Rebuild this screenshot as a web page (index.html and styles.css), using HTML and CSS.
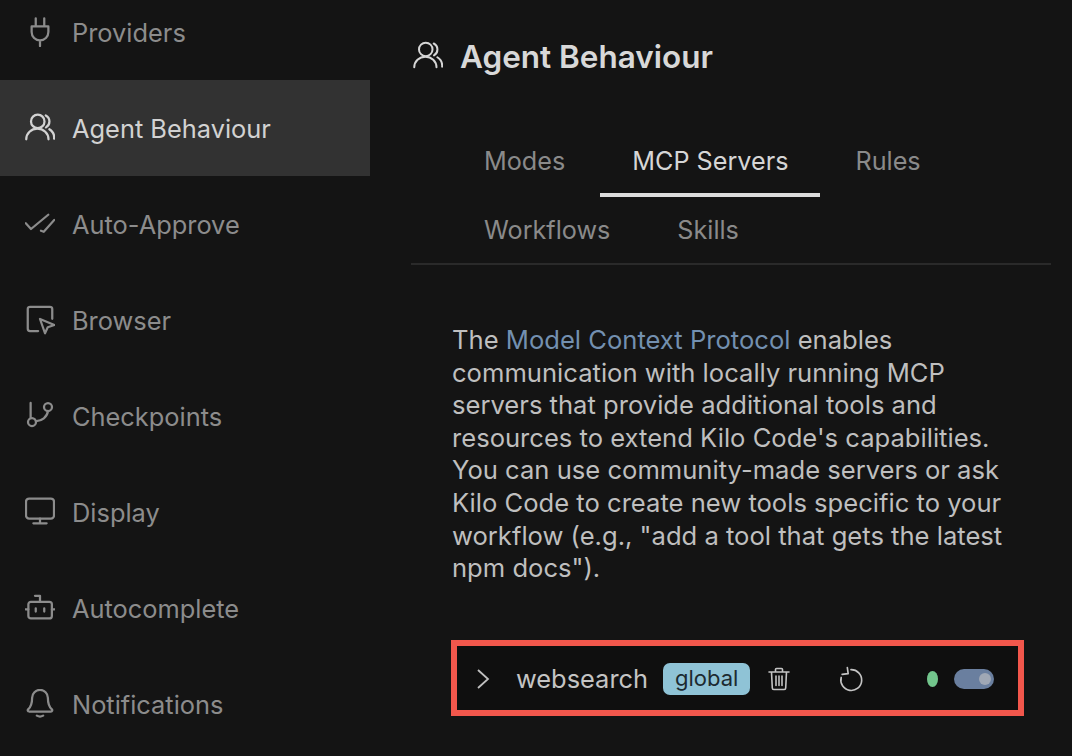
FILE: index.html
```html
<!DOCTYPE html>
<html lang="en">
<head>
<meta charset="utf-8">
<title>Agent Behaviour</title>
<link rel="stylesheet" href="styles.css">
</head>
<body>
<div class="app">
  <nav class="sidebar">
    <a class="nav-item"><svg class="nav-icon" viewBox="0 0 24 24"><path d="M8.600 1v6.500M15.400 1v6.500M5.300 7.500h13.400v4.500a6.700 6.700 0 0 1-13.400 0zM12 18.700v4.500"/></svg><span>Providers</span></a>
    <a class="nav-item active"><svg class="nav-icon" viewBox="0 0 24 24"><circle cx="10.200" cy="6.700" r="5.400"/><path d="M1 21A8.800 8.400 0 0 1 18.800 21M16.600 2A5.400 5.400 0 0 1 16.800 11.500M19.500 13A8 8 0 0 1 23.300 20.500"/></svg><span>Agent Behaviour</span></a>
    <a class="nav-item"><svg class="nav-icon" viewBox="0 0 24 24"><path d="M.6 11.400L4.800 16 18.600 4.600M12.800 17.400L15 18.200 23.400 8.800"/></svg><span>Auto-Approve</span></a>
    <a class="nav-item"><svg class="nav-icon" viewBox="0 0 24 24"><path d="M10.500 20.800H4a1.800 1.800 0 0 1-1.800-1.800V3.200A1.800 1.800 0 0 1 4 1.400h16a1.800 1.800 0 0 1 1.800 1.800V11"/><path d="M12 11.200L23.500 16 18.200 17.800 16 22.600z"/></svg><span>Browser</span></a>
    <a class="nav-item"><svg class="nav-icon" viewBox="0 0 24 24"><path d="M4.500 1.500v12"/><circle cx="18.400" cy="4.800" r="3.200"/><circle cx="5.600" cy="16.800" r="3.200"/><path d="M18.400 8A9.500 9.500 0 0 1 8.700 16"/></svg><span>Checkpoints</span></a>
    <a class="nav-item"><svg class="nav-icon" viewBox="0 0 24 24"><rect x=".8" y="1.200" width="22.400" height="16" rx="2.500"/><path d="M6.700 21h10.600M12 17.200V21"/></svg><span>Display</span></a>
    <a class="nav-item"><svg class="nav-icon" viewBox="0 0 24 24"><path d="M12 7V2.200H8"/><rect x="2.700" y="7" width="18.800" height="13.300" rx="2"/><path d="M.5 13h2.200M21.500 13h2.200M8.600 12.200v2.600M15.400 12.200v2.600"/></svg><span>Autocomplete</span></a>
    <a class="nav-item"><svg class="nav-icon" viewBox="0 0 24 24"><path d="M9.500 21.300q2.500 1.500 5 0M3.200 18h17.600a1 1 0 0 0 .7-1.700C20 15 18.300 13 18.300 7A6.300 6.300 0 0 0 5.700 7c0 6-1.700 8-3.200 9.300A1 1 0 0 0 3.200 18z"/></svg><span>Notifications</span></a>
  </nav>
  <main class="content">
    <header class="page-header">
      <svg class="header-icon" viewBox="0 0 24 24"><circle cx="10.200" cy="6.700" r="5.400"/><path d="M1 21A8.800 8.400 0 0 1 18.800 21M16.600 2A5.400 5.400 0 0 1 16.800 11.500M19.500 13A8 8 0 0 1 23.300 20.500"/></svg>
      <h1>Agent Behaviour</h1>
    </header>
    <div class="tabs">
      <a class="tab">Modes</a>
      <a class="tab selected">MCP Servers</a>
      <a class="tab">Rules</a>
      <a class="tab">Workflows</a>
      <a class="tab">Skills</a>
    </div>
    <section class="panel">
      <p class="intro">The <a class="link">Model Context Protocol</a> enables communication with locally running MCP servers that provide additional tools and resources to extend Kilo Code's capabilities. You can use community-made servers or ask Kilo Code to create new tools specific to your workflow (e.g., "add a tool that gets the latest npm docs").</p>
      <div class="server-row">
        <svg class="chevron" viewBox="0 0 16 24"><path d="M3 3l10 9-10 9"/></svg>
        <span class="server-name">websearch</span>
        <span class="badge">global</span>
        <svg class="row-icon trash" viewBox="0 0 24 24"><path d="M2 5h20M8.500 5V2.500a1 1 0 0 1 1-1h5a1 1 0 0 1 1 1V5M4.500 5l.8 16a1.500 1.500 0 0 0 1.500 1.500h10.400a1.500 1.500 0 0 0 1.500-1.500l.8-16M9 9v9.500M12 9v9.500M15 9v9.500"/></svg>
        <svg class="row-icon refresh" viewBox="0 0 24 24"><path d="M11.500 3A10 10 0 1 1 2.100 10.500M8 1L8.800 6.800 3 7.600"/></svg>
        <span class="status"></span>
        <span class="toggle"><span class="knob"></span></span>
      </div>
    </section>
  </main>
</div>
</body>
</html>
```

FILE: styles.css
```css
* { box-sizing: border-box; }
html, body { margin: 0; height: 100%; }
body {
  background: #141414;
  color: #cfcfcf;
  font-family: Inter, "Liberation Sans", sans-serif;
  overflow: hidden;
}
.app { display: flex; height: 756px; overflow: hidden; }
.sidebar {
  width: 370px;
  flex: none;
  margin-top: -16px;
  display: flex;
  flex-direction: column;
}
.nav-item {
  height: 96px;
  flex: none;
  display: flex;
  align-items: center;
  gap: 17px;
  padding-left: 25px;
  color: #8c8c8c;
  font-size: 25.4px;
}
.nav-item.active { background: #323232; color: #d2d2d2; }
.nav-icon {
  width: 30px;
  height: 30px;
  flex: none;
  fill: none;
  stroke: currentColor;
  stroke-width: 1.8;
  stroke-linecap: round;
  stroke-linejoin: round;
}
.content { width: 640px; margin-left: 41px; display: flex; flex-direction: column; flex: none; }
.page-header { display: flex; align-items: center; gap: 17px; height: 38px; margin-top: 37px; margin-bottom: 1px; padding-left: 2px; }
.header-icon {
  width: 30px;
  height: 30px;
  fill: none;
  stroke: #d6d6d6;
  stroke-width: 1.6;
  stroke-linecap: round;
}
h1 { margin: 0; font-size: 31.5px; font-weight: 600; color: #d8d8d8; }
.tabs {
  display: flex;
  flex-wrap: wrap;
  align-content: flex-start;
  height: 137px;
  margin-top: 52px;
  padding-left: 41px;
  border-bottom: 2px solid #2a2a2a;
  flex: none;
}
.tab {
  height: 69px;
  padding: 0 32px;
  margin-right: 3px;
  display: flex;
  align-items: center;
  font-size: 25.2px;
  color: #8a8a8a;
  border-bottom: 4px solid transparent;
}
.tab.selected { color: #d6d6d6; border-bottom-color: #dcdcdc; }
.panel { padding: 59px 0 0 41px; width: 620px; }
.intro { margin: 0; font-size: 25.6px; line-height: 32.6px; color: #bfbfbf; width: 565px; }
.link { color: #7390b0; }
.server-row {
  display: flex;
  align-items: center;
  height: 76px;
  margin-top: 55px;
  border: 6px solid #f2574c;
  padding: 2px 0 0 18px;
  width: 573px;
  background: #0f0f0f;
  margin-left: -1px;
}
.chevron { width: 16px; height: 24px; fill: none; stroke: #c0c0c0; stroke-width: 1.8; flex: none; }
.server-name { margin-left: 25px; font-size: 25.4px; color: #c4c4c4; }
.badge {
  margin-left: 15px;
  background: #8fc3d6;
  color: #1c2a30;
  font-size: 22px;
  padding: 0 12px;
  height: 32px;
  line-height: 31px;
  border-radius: 7px;
}
.row-icon { flex: none; fill: none; stroke: #c4c4c4; stroke-width: 1.6; stroke-linecap: round; stroke-linejoin: round; }
.trash { width: 24px; height: 24px; margin-left: 17px; }
.refresh { width: 25px; height: 26px; margin-left: 48px; }
.status { width: 11px; height: 16px; border-radius: 50%; background: #72c58c; margin-left: 63px; flex: none; }
.toggle {
  width: 40px;
  height: 20px;
  margin-left: 16px;
  border-radius: 10px;
  background: #6a7f9f;
  display: flex;
  align-items: center;
  justify-content: flex-end;
  padding-right: 3px;
  flex: none;
}
.knob { width: 12px; height: 12px; border-radius: 50%; background: #a0a8b5; }
```
